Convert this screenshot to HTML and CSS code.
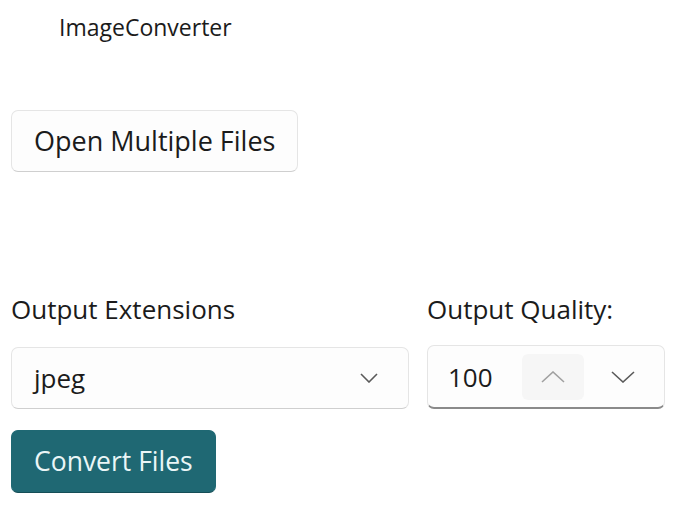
FILE: index.html
```html
<!DOCTYPE html>
<html>
<head>
<meta charset="utf-8">
<link rel="stylesheet" href="styles.css">
</head>
<body>
<div class="app">
  <div class="titlebar">ImageConverter</div>
  <button class="btn">Open Multiple Files</button>
  <div class="options">
    <div class="field ext">
      <div class="label">Output Extensions</div>
      <div class="combo">
        <span class="value">jpeg</span>
        <svg class="chev" width="18" height="10" viewBox="0 0 18 10"><path d="M1 1 L9 9 L17 1" fill="none" stroke="#5a5a5a" stroke-width="1.6"/></svg>
      </div>
    </div>
    <div class="field quality">
      <div class="label">Output Quality:</div>
      <div class="numberbox">
        <span class="value">100</span>
        <span class="spin up"><svg width="24" height="12" viewBox="0 0 24 12"><path d="M1 11 L12 1 L23 11" fill="none" stroke="#a0a0a0" stroke-width="1.6"/></svg></span>
        <span class="spin down"><svg width="24" height="12" viewBox="0 0 24 12"><path d="M1 1 L12 11 L23 1" fill="none" stroke="#5a5a5a" stroke-width="1.6"/></svg></span>
      </div>
    </div>
  </div>
  <button class="btn accent">Convert Files</button>
</div>
</body>
</html>
```
FILE: styles.css
```css
html, body {
  margin: 0;
  padding: 0;
  background: #ffffff;
}
body {
  font-family: "Open Sans", "Noto Sans", sans-serif;
  color: #1b1b1b;
}
.app {
  display: flex;
  flex-direction: column;
  align-items: flex-start;
  padding: 0 11px;
}
.titlebar {
  font-size: 23px;
  line-height: 28px;
  margin: 13px 0 0 48px;
  color: #1b1b1b;
}
.btn {
  font-family: inherit;
  font-size: 27px;
  line-height: 36px;
  color: #1b1b1b;
  background: #fdfdfd;
  border: 1px solid #e5e5e5;
  border-bottom-color: #cfcfcf;
  border-radius: 7px;
  padding: 12px 22px 12px;
  margin-top: 69px;
  cursor: default;
}
.options {
  display: flex;
  gap: 18px;
  margin-top: 120px;
}
.field {
  display: flex;
  flex-direction: column;
}
.label {
  font-size: 26px;
  line-height: 34px;
  margin-bottom: 21px;
}
.quality .label { margin-bottom: 19px; }
.combo {
  width: 398px;
  height: 62px;
  box-sizing: border-box;
  display: flex;
  align-items: center;
  justify-content: space-between;
  border: 1px solid #e5e5e5;
  border-bottom-color: #cfcfcf;
  border-radius: 7px;
  background: #fdfdfd;
  padding: 0 30px 0 22px;
  font-size: 26px;
}
.numberbox {
  width: 238px;
  height: 64px;
  box-sizing: border-box;
  display: flex;
  align-items: center;
  border: 1px solid #e5e5e5;
  border-bottom: 2px solid #8a8a8a;
  border-radius: 7px;
  background: #fdfdfd;
  padding: 0 0 0 20px;
  font-size: 26px;
}
.numberbox .value {
  width: 74px;
}
.spin {
  display: flex;
  align-items: center;
  justify-content: center;
  width: 62px;
  height: 46px;
  border-radius: 6px;
}
.spin.up {
  background: #f6f6f6;
}
.spin.down {
  margin-left: 8px;
}
.accent {
  margin-top: 21px;
  font-size: 26.5px;
  background: #1f6873;
  color: #eaf6f7;
  border: 1px solid #1f6873;
  border-bottom-color: #154e57;
  padding: 12px 22px 13px;
}
```
